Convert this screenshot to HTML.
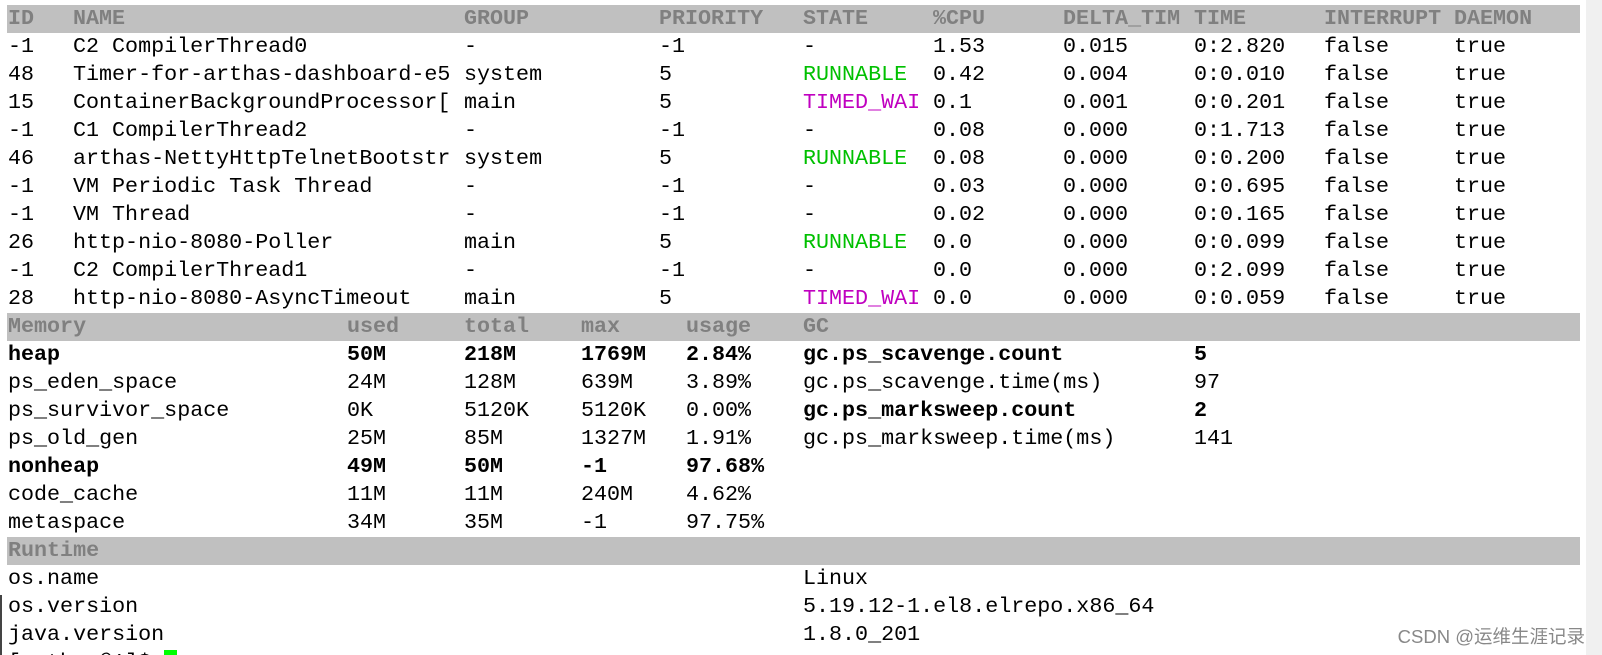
<!DOCTYPE html>
<html><head><meta charset="utf-8"><style>
html,body{margin:0;padding:0;background:#fff;width:1602px;height:655px;overflow:hidden;position:relative}
.t{position:absolute;left:0;top:5px;width:1602px;font-family:"Liberation Mono",monospace;font-size:21.7px;color:#000}
.l{height:28px;line-height:28px;white-space:pre;position:relative}
.l span{position:absolute;top:0}
.h{background:#c0c0c0;color:#808080;font-weight:bold;margin-left:7px;width:1573px}
.h span{margin-left:-7px}
.c0{left:8px}.c5{left:73px}.c26{left:347px}.c35{left:464px}.c44{left:581px}.c50{left:659px}.c52{left:686px}
.c61{left:803px}.c71{left:933px}.c81{left:1063px}.c91{left:1194px}.c101{left:1324px}.c111{left:1454px}
.g{color:#00c000}.m{color:#c000c0}.b{font-weight:bold}
.cur{display:inline-block;width:13px;height:14px;background:#00ff00;vertical-align:top;margin-top:1px}
.wm{position:absolute;right:17px;top:623px;font-family:"Liberation Sans","Noto Sans CJK SC",sans-serif;font-size:18.5px;color:#888;white-space:nowrap}
.strip{position:absolute;right:0;top:0;width:16px;height:655px;background:#f0f0f0}
.lb{position:absolute;left:0;top:595px;width:2px;height:60px;background:#444}
</style></head><body>
<div class="t">
<div class="l h"><span class="c0">ID</span><span class="c5">NAME</span><span class="c35">GROUP</span><span class="c50">PRIORITY</span><span class="c61">STATE</span><span class="c71">%CPU</span><span class="c81">DELTA_TIM</span><span class="c91">TIME</span><span class="c101">INTERRUPT</span><span class="c111">DAEMON</span></div>
<div class="l"><span class="c0">-1</span><span class="c5">C2 CompilerThread0</span><span class="c35">-</span><span class="c50">-1</span><span class="c61">-</span><span class="c71">1.53</span><span class="c81">0.015</span><span class="c91">0:2.820</span><span class="c101">false</span><span class="c111">true</span></div>
<div class="l"><span class="c0">48</span><span class="c5">Timer-for-arthas-dashboard-e5</span><span class="c35">system</span><span class="c50">5</span><span class="c61 g">RUNNABLE</span><span class="c71">0.42</span><span class="c81">0.004</span><span class="c91">0:0.010</span><span class="c101">false</span><span class="c111">true</span></div>
<div class="l"><span class="c0">15</span><span class="c5">ContainerBackgroundProcessor[</span><span class="c35">main</span><span class="c50">5</span><span class="c61 m">TIMED_WAI</span><span class="c71">0.1</span><span class="c81">0.001</span><span class="c91">0:0.201</span><span class="c101">false</span><span class="c111">true</span></div>
<div class="l"><span class="c0">-1</span><span class="c5">C1 CompilerThread2</span><span class="c35">-</span><span class="c50">-1</span><span class="c61">-</span><span class="c71">0.08</span><span class="c81">0.000</span><span class="c91">0:1.713</span><span class="c101">false</span><span class="c111">true</span></div>
<div class="l"><span class="c0">46</span><span class="c5">arthas-NettyHttpTelnetBootstr</span><span class="c35">system</span><span class="c50">5</span><span class="c61 g">RUNNABLE</span><span class="c71">0.08</span><span class="c81">0.000</span><span class="c91">0:0.200</span><span class="c101">false</span><span class="c111">true</span></div>
<div class="l"><span class="c0">-1</span><span class="c5">VM Periodic Task Thread</span><span class="c35">-</span><span class="c50">-1</span><span class="c61">-</span><span class="c71">0.03</span><span class="c81">0.000</span><span class="c91">0:0.695</span><span class="c101">false</span><span class="c111">true</span></div>
<div class="l"><span class="c0">-1</span><span class="c5">VM Thread</span><span class="c35">-</span><span class="c50">-1</span><span class="c61">-</span><span class="c71">0.02</span><span class="c81">0.000</span><span class="c91">0:0.165</span><span class="c101">false</span><span class="c111">true</span></div>
<div class="l"><span class="c0">26</span><span class="c5">http-nio-8080-Poller</span><span class="c35">main</span><span class="c50">5</span><span class="c61 g">RUNNABLE</span><span class="c71">0.0</span><span class="c81">0.000</span><span class="c91">0:0.099</span><span class="c101">false</span><span class="c111">true</span></div>
<div class="l"><span class="c0">-1</span><span class="c5">C2 CompilerThread1</span><span class="c35">-</span><span class="c50">-1</span><span class="c61">-</span><span class="c71">0.0</span><span class="c81">0.000</span><span class="c91">0:2.099</span><span class="c101">false</span><span class="c111">true</span></div>
<div class="l"><span class="c0">28</span><span class="c5">http-nio-8080-AsyncTimeout</span><span class="c35">main</span><span class="c50">5</span><span class="c61 m">TIMED_WAI</span><span class="c71">0.0</span><span class="c81">0.000</span><span class="c91">0:0.059</span><span class="c101">false</span><span class="c111">true</span></div>
<div class="l h"><span class="c0">Memory</span><span class="c26">used</span><span class="c35">total</span><span class="c44">max</span><span class="c52">usage</span><span class="c61">GC</span></div>
<div class="l b"><span class="c0">heap</span><span class="c26">50M</span><span class="c35">218M</span><span class="c44">1769M</span><span class="c52">2.84%</span><span class="c61">gc.ps_scavenge.count</span><span class="c91">5</span></div>
<div class="l"><span class="c0">ps_eden_space</span><span class="c26">24M</span><span class="c35">128M</span><span class="c44">639M</span><span class="c52">3.89%</span><span class="c61">gc.ps_scavenge.time(ms)</span><span class="c91">97</span></div>
<div class="l"><span class="c0">ps_survivor_space</span><span class="c26">0K</span><span class="c35">5120K</span><span class="c44">5120K</span><span class="c52">0.00%</span><span class="c61 b">gc.ps_marksweep.count</span><span class="c91 b">2</span></div>
<div class="l"><span class="c0">ps_old_gen</span><span class="c26">25M</span><span class="c35">85M</span><span class="c44">1327M</span><span class="c52">1.91%</span><span class="c61">gc.ps_marksweep.time(ms)</span><span class="c91">141</span></div>
<div class="l b"><span class="c0">nonheap</span><span class="c26">49M</span><span class="c35">50M</span><span class="c44">-1</span><span class="c52">97.68%</span></div>
<div class="l"><span class="c0">code_cache</span><span class="c26">11M</span><span class="c35">11M</span><span class="c44">240M</span><span class="c52">4.62%</span></div>
<div class="l"><span class="c0">metaspace</span><span class="c26">34M</span><span class="c35">35M</span><span class="c44">-1</span><span class="c52">97.75%</span></div>
<div class="l h"><span class="c0">Runtime</span></div>
<div class="l"><span class="c0">os.name</span><span class="c61">Linux</span></div>
<div class="l"><span class="c0">os.version</span><span class="c61">5.19.12-1.el8.elrepo.x86_64</span></div>
<div class="l"><span class="c0">java.version</span><span class="c61">1.8.0_201</span></div>
<div class="l"><span class="c0">[arthas@1]$ <span class="cur" style="position:static"></span></span></div>
</div>
<div class="lb"></div>
<div class="wm">CSDN @运维生涯记录</div>
<div class="strip"></div>
</body></html>
